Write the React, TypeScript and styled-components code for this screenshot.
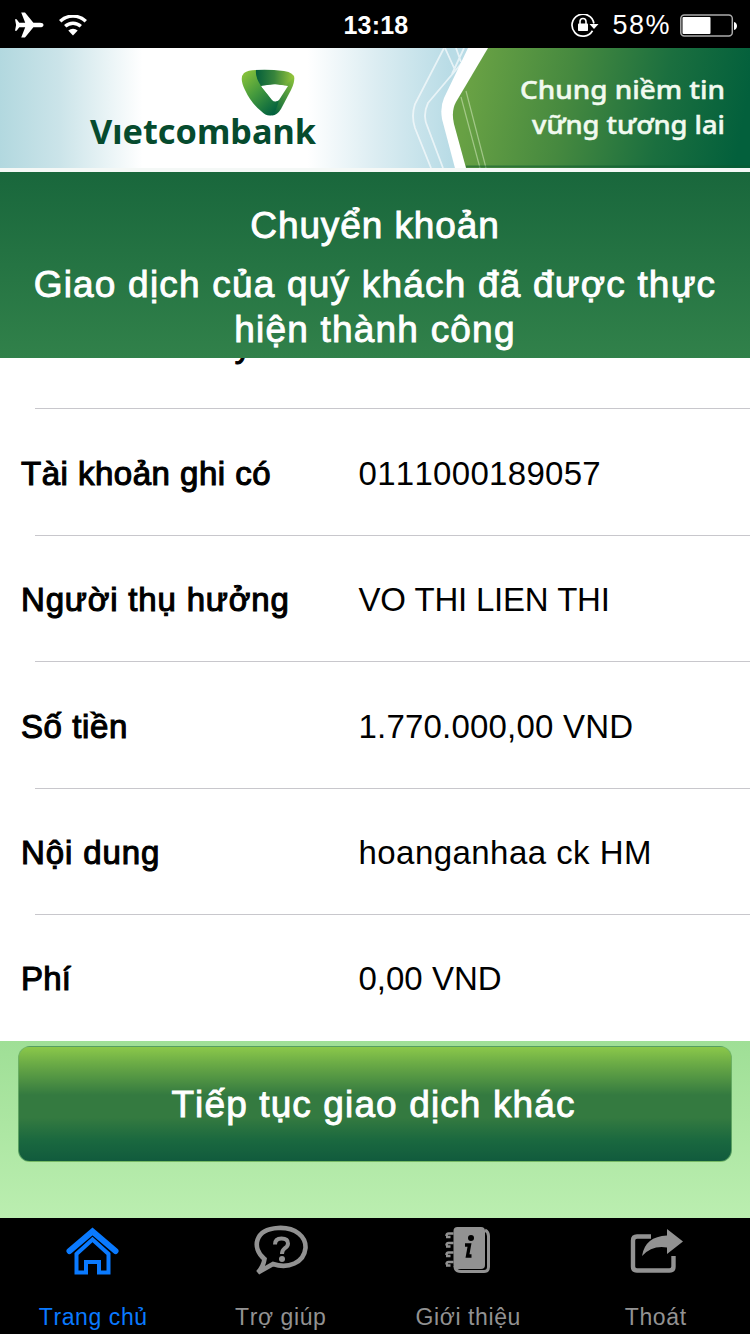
import React from "react";
import styled, { createGlobalStyle } from "styled-components";

const Global = createGlobalStyle`
  * { box-sizing: border-box; }
  body { margin: 0; background: #000; font-family: "Liberation Sans", Arial, sans-serif; font-kerning: none; }
`;

const Screen = styled.div`
  width: 750px;
  height: 1334px;
  display: flex;
  flex-direction: column;
  overflow: hidden;
  background: #fff;
`;

const StatusBar = styled.header`
  height: 48px;
  flex: none;
  display: grid;
  grid-template-columns: 1fr auto 1fr;
  align-items: center;
  padding: 3px 12px 0 14px;
  background: #000;
  color: #fff;
`;

const StatusGroup = styled.div<{ $end?: boolean }>`
  display: flex;
  align-items: center;
  justify-content: ${(p) => (p.$end ? "flex-end" : "flex-start")};
  gap: ${(p) => (p.$end ? 9 : 15)}px;
`;

const Clock = styled.span`
  font-size: 25px;
  font-weight: 700;
  letter-spacing: 0.2px;
`;

const Percent = styled.span`
  font-size: 27px;
  letter-spacing: 1.5px;
  margin-left: 4px;
`;

const Banner = styled.div`
  height: 124px;
  flex: none;
  svg { display: block; }
`;

const Heading = styled.section`
  height: 186px;
  flex: none;
  padding: 31.5px 20px 0;
  background: linear-gradient(#19673c, #31814a);
  color: #fff;
  text-align: center;
  -webkit-text-stroke: 0.9px #fff;
`;

const Title = styled.h1`
  margin: 0 0 15.5px;
  font-size: 37px;
  font-weight: 400;
  line-height: 44px;
  letter-spacing: 0.9px;
`;

const Message = styled.p`
  margin: 0;
  font-size: 37px;
  line-height: 44.5px;
  letter-spacing: 1.2px;
`;

const Details = styled.dl`
  height: 683px;
  flex: none;
  margin: 0;
  display: flex;
  flex-direction: column;
  justify-content: flex-end;
  overflow: hidden;
  background: #fff;
`;

const Row = styled.div<{ $first?: boolean; $last?: boolean }>`
  height: ${(p) => (p.$last ? 126 : 126.5)}px;
  flex: none;
  display: grid;
  grid-template-columns: 337.5px 1fr;
  align-items: center;
  padding: ${(p) => (p.$first ? 0 : 2.5)}px 0 0 21px;
  color: #000;
  font-size: 33px;
  background: ${(p) =>
    p.$last ? "none" : "linear-gradient(#c8c7cc, #c8c7cc) 35px 100% / 100% 1px no-repeat"};
`;

const Label = styled.dt<{ $space: number }>`
  -webkit-text-stroke: 1.1px #000;
  letter-spacing: ${(p) => p.$space}px;
`;

const Value = styled.dd<{ $space: number }>`
  margin: 0;
  letter-spacing: ${(p) => p.$space}px;
`;

const Actions = styled.section`
  height: 177px;
  flex: none;
  padding: 5px 18px 0;
  background: linear-gradient(#9fdf96, #bbeeb0);
`;

const ActionButton = styled.button`
  width: 100%;
  height: 116px;
  display: block;
  padding: 1px 3px 0 0;
  border: 1px solid rgba(110, 180, 110, 0.75);
  border-radius: 12px;
  background: linear-gradient(#8bc84a 0%, #6cac46 14%, #347a40 42%, #347a40 62%, #1a683f 82%, #115b3d 100%);
  color: #fff;
  font: 400 37px "Liberation Sans", Arial, sans-serif;
  font-kerning: none;
  letter-spacing: 1.12px;
  -webkit-text-stroke: 0.9px #fff;
`;

const TabBar = styled.nav`
  height: 116px;
  flex: none;
  display: grid;
  grid-template-columns: repeat(4, 1fr);
  background: #000;
`;

const Tab = styled.a<{ $active?: boolean }>`
  display: flex;
  flex-direction: column;
  align-items: center;
  justify-content: space-between;
  padding: 5px 1px 3px 0;
  color: ${(p) => (p.$active ? "#0a7aff" : "#929292")};
  font-size: 23px;
  line-height: 27px;
  letter-spacing: 0.6px;
`;

const rows = [
  { label: "Hình thức chuyển", value: "Tài khoản thanh toán", ls: 0.5, vs: 0.3 },
  { label: "Tài khoản ghi có", value: "0111000189057", ls: 0.5, vs: 0.3 },
  { label: "Người thụ hưởng", value: "VO THI LIEN THI", ls: 0.82, vs: -0.25 },
  { label: "Số tiền", value: "1.770.000,00 VND", ls: 0.6, vs: 0.2 },
  { label: "Nội dung", value: "hoanganhaa ck HM", ls: 0.9, vs: 0.45 },
  { label: "Phí", value: "0,00 VND", ls: 0.2, vs: 0 },
];

const Plane = () => (
  <svg width="30" height="28" viewBox="0 0 30 28" fill="#fff">
    <path d="M29.500 14c0-1.500-1.500-2.300-3.500-2.300h-6.600L11 1.500H7.200l4 10.200H5.300L2.600 8.200H1l1.100 5.800L1 19.800h1.600l2.700-3.500h5.900l-4 10.200H11l8.400-10.200H26c2 0 3.500-.8 3.500-2.300z" transform="translate(0 -1)" />
  </svg>
);

const Wifi = () => (
  <svg width="28" height="22" viewBox="0 1 28 22" fill="none" stroke="#fff" strokeWidth="3.4">
    <path d="M1.200 7.300a18.500 18.500 0 0 1 25.600 0M6.200 12.300a11.500 11.500 0 0 1 15.600 0" />
    <path d="M14 21.500l-4.700-5a7 7 0 0 1 9.400 0z" fill="#fff" stroke="none" />
  </svg>
);

const RotationLock = () => (
  <svg width="28" height="24" viewBox="0 1 28 24">
    <path d="M21.500 17.200A11 11 0 1 1 22.900 10" fill="none" stroke="#fff" strokeWidth="1.700" transform="translate(0 .5)" />
    <path d="M18.500 11h9L23 16z" fill="#fff" />
    <rect x="7" y="10.500" width="10" height="7.500" rx=".8" fill="#fff" />
    <path d="M9 11V8.500a3 3 0 0 1 6 0V11" fill="none" stroke="#fff" strokeWidth="1.600" />
  </svg>
);

const Battery = () => (
  <svg width="58" height="24" viewBox="0 0 58 24">
    <rect x=".8" y="1" width="51.500" height="21" rx="3.500" fill="none" stroke="#aaa" strokeWidth="1.500" />
    <rect x="2.500" y="3" width="28" height="17" rx="1" fill="#fff" />
    <path d="M54 8c4 1 4 7 0 8z" fill="#fff" />
  </svg>
);

const BrandBanner = () => (
  <svg width="750" height="124" viewBox="0 48 750 124">
    <defs>
      <linearGradient id="sky">
        <stop offset="0" stopColor="#b2d8df" />
        <stop offset=".08" stopColor="#cbe4e9" />
        <stop offset=".19" stopColor="#fff" />
        <stop offset=".41" stopColor="#fff" />
        <stop offset=".5" stopColor="#dcedf2" />
        <stop offset=".6" stopColor="#b9dce6" />
      </linearGradient>
      <linearGradient id="leaf" gradientUnits="userSpaceOnUse" x1="470" y1="90" x2="740" y2="140">
        <stop offset="0" stopColor="#68a144" />
        <stop offset=".35" stopColor="#46893f" />
        <stop offset=".7" stopColor="#1b6f3f" />
        <stop offset="1" stopColor="#03603c" />
      </linearGradient>
      <linearGradient id="markLeft" x1="0" y1="0" x2=".75" y2="1">
        <stop offset="0" stopColor="#92c83a" />
        <stop offset=".5" stopColor="#459a3d" />
        <stop offset="1" stopColor="#04633f" />
      </linearGradient>
      <linearGradient id="markTop">
        <stop offset="0" stopColor="#005b3b" />
        <stop offset=".5" stopColor="#37843c" />
        <stop offset="1" stopColor="#9ac83b" />
      </linearGradient>
      <linearGradient id="markRight" x1="1" y1="0" x2=".2" y2="1">
        <stop offset="0" stopColor="#8cc43b" />
        <stop offset="1" stopColor="#02613e" />
      </linearGradient>
    </defs>
    <rect y="48" width="750" height="124" fill="url(#sky)" />
    <g fill="none" stroke="#fff" strokeWidth="1.800" opacity=".65">
      <path d="M444 48L415 104Q411 116 415 128L431 168" />
      <path d="M466 58L428 103Q422 116 428 128L443 168" />
      <path d="M445 48L455 70M456 48L461 62M464 48L452 74" />
    </g>
    <path d="M468 48L444 98Q440 107 442 119L456 172H750V48z" fill="#fff" />
    <path d="M488 48L456 102Q451 111 454 124L466 168H750V48z" fill="url(#leaf)" />
    <path d="M461 97L480 168M466 91L486 168" fill="none" stroke="#d6eabf" strokeWidth="1.200" opacity=".55" />
    <path d="M466 166.500H750" stroke="#0c5a30" strokeWidth="2" opacity=".55" />
    <path d="M0 170H750" stroke="#f4f8f6" strokeWidth="4" />
    <path d="M255 70Q269 69 284 71Q296 73 294 80L288 87Q276 82 261 87Q252 78 255 70z" fill="url(#markTop)" />
    <path d="M294 77Q295 82 291 90L281 109Q276 117 270 115L276 101L287 84z" fill="url(#markRight)" />
    <path d="M256 70Q255 77 261 86L272 100Q275 103 279 100Q276 112 272 115Q267 117 261 111Q251 103 245 90Q239 78 244 73Q248 70 256 70z" fill="url(#markLeft)" />
    <path d="M261 86Q274 83 288 86L279 100Q276 102.500 273 100z" fill="#fff" />
    <text x="90" y="143.500" fontFamily="'Noto Sans', sans-serif" fontSize="34.500" fontWeight="700" fill="#064b2e" textLength="226" lengthAdjust="spacingAndGlyphs">Vıetcombank</text>
    <g fontFamily="'Noto Sans', sans-serif" fontSize="26" fontWeight="500" fill="#f1faef" stroke="#f1faef" strokeWidth=".5">
      <text x="520" y="99" textLength="205" lengthAdjust="spacingAndGlyphs">Chung niềm tin</text>
      <text x="532" y="133.500" textLength="193" lengthAdjust="spacingAndGlyphs">vững tương lai</text>
    </g>
  </svg>
);

const HomeIcon = () => (
  <svg width="54" height="52" viewBox="1 0 54 52" fill="none" stroke="currentColor">
    <path d="M4.500 28L27.500 8.500L50.500 28" strokeWidth="6" strokeLinecap="round" />
    <path d="M11.500 49.500V31L27.500 16.500L43.500 31V49.500H34V39H21V49.500z" strokeWidth="4" />
  </svg>
);

const HelpIcon = () => (
  <svg width="54" height="52" viewBox="0 0 54 52" fill="none" stroke="currentColor">
    <path d="M10.500 36C-3 25 1 6 24 5C42 4 52 14 51.500 25C50 40 34 46 19 41L4 49.500Q9.500 43 10.500 36z" strokeWidth="4.600" />
    <path d="M21 21.500Q21 15.500 27.500 15.500Q34 15.500 34 20.500Q34 23.500 30.500 25.500Q28 27.500 28 31" strokeWidth="4" />
    <circle cx="28" cy="36" r="3" fill="currentColor" stroke="none" />
  </svg>
);

const InfoIcon = () => (
  <svg width="46" height="52" viewBox="0 0 46 52" fill="none" stroke="currentColor">
    <path d="M10 43Q10 48.500 16 48.500H39Q43.500 48.500 43.500 44V13Q43.500 9 40 7" strokeWidth="3" />
    <rect x="8.500" y="4" width="31.500" height="42" rx="4" fill="currentColor" stroke="none" />
    <path d="M8.500 10.500H3.500Q1.500 10.500 1.500 13M5.500 14H1M8.500 20H3.500Q1.500 20 1.500 22.500M5.500 23.500H1M8.500 29.500H3.500Q1.500 29.500 1.500 32M5.500 33H1M8.500 39H3.500Q1.500 39 1.500 41.500M5.500 42.500H1" strokeWidth="2.600" />
    <g stroke="#000">
      <circle cx="26" cy="15" r="3" fill="#000" stroke="none" />
      <path d="M20 22H24.500L22.500 33H26.500" strokeWidth="3.300" />
    </g>
  </svg>
);

const ExitIcon = () => (
  <svg width="54" height="52" viewBox="0 0 54 52">
    <path d="M22 13.500H8Q4 13.500 4 17.500V43.500Q4 47.500 8 47.500H40.500Q44.500 47.500 44.500 43.500V33" fill="none" stroke="currentColor" strokeWidth="4.400" />
    <path d="M13 33Q16 13.500 38 12.500V6L54 18.500L38 31V24.500Q23 22 13 33z" fill="currentColor" />
  </svg>
);

export default function App() {
  return (
    <Screen>
      <Global />
      <StatusBar>
        <StatusGroup><Plane /><Wifi /></StatusGroup>
        <Clock>13:18</Clock>
        <StatusGroup $end><RotationLock /><Percent>58%</Percent><Battery /></StatusGroup>
      </StatusBar>
      <Banner><BrandBanner /></Banner>
      <Heading>
        <Title>Chuyển khoản</Title>
        <Message>Giao dịch của quý khách đã được thực hiện thành công</Message>
      </Heading>
      <Details>
        {rows.map((r, i) => (
          <Row key={r.label} $first={i === 0} $last={i === rows.length - 1}>
            <Label $space={r.ls}>{r.label}</Label>
            <Value $space={r.vs}>{r.value}</Value>
          </Row>
        ))}
      </Details>
      <Actions><ActionButton>Tiếp tục giao dịch khác</ActionButton></Actions>
      <TabBar>
        <Tab $active><HomeIcon />Trang chủ</Tab>
        <Tab><HelpIcon />Trợ giúp</Tab>
        <Tab><InfoIcon />Giới thiệu</Tab>
        <Tab><ExitIcon />Thoát</Tab>
      </TabBar>
    </Screen>
  );
}
